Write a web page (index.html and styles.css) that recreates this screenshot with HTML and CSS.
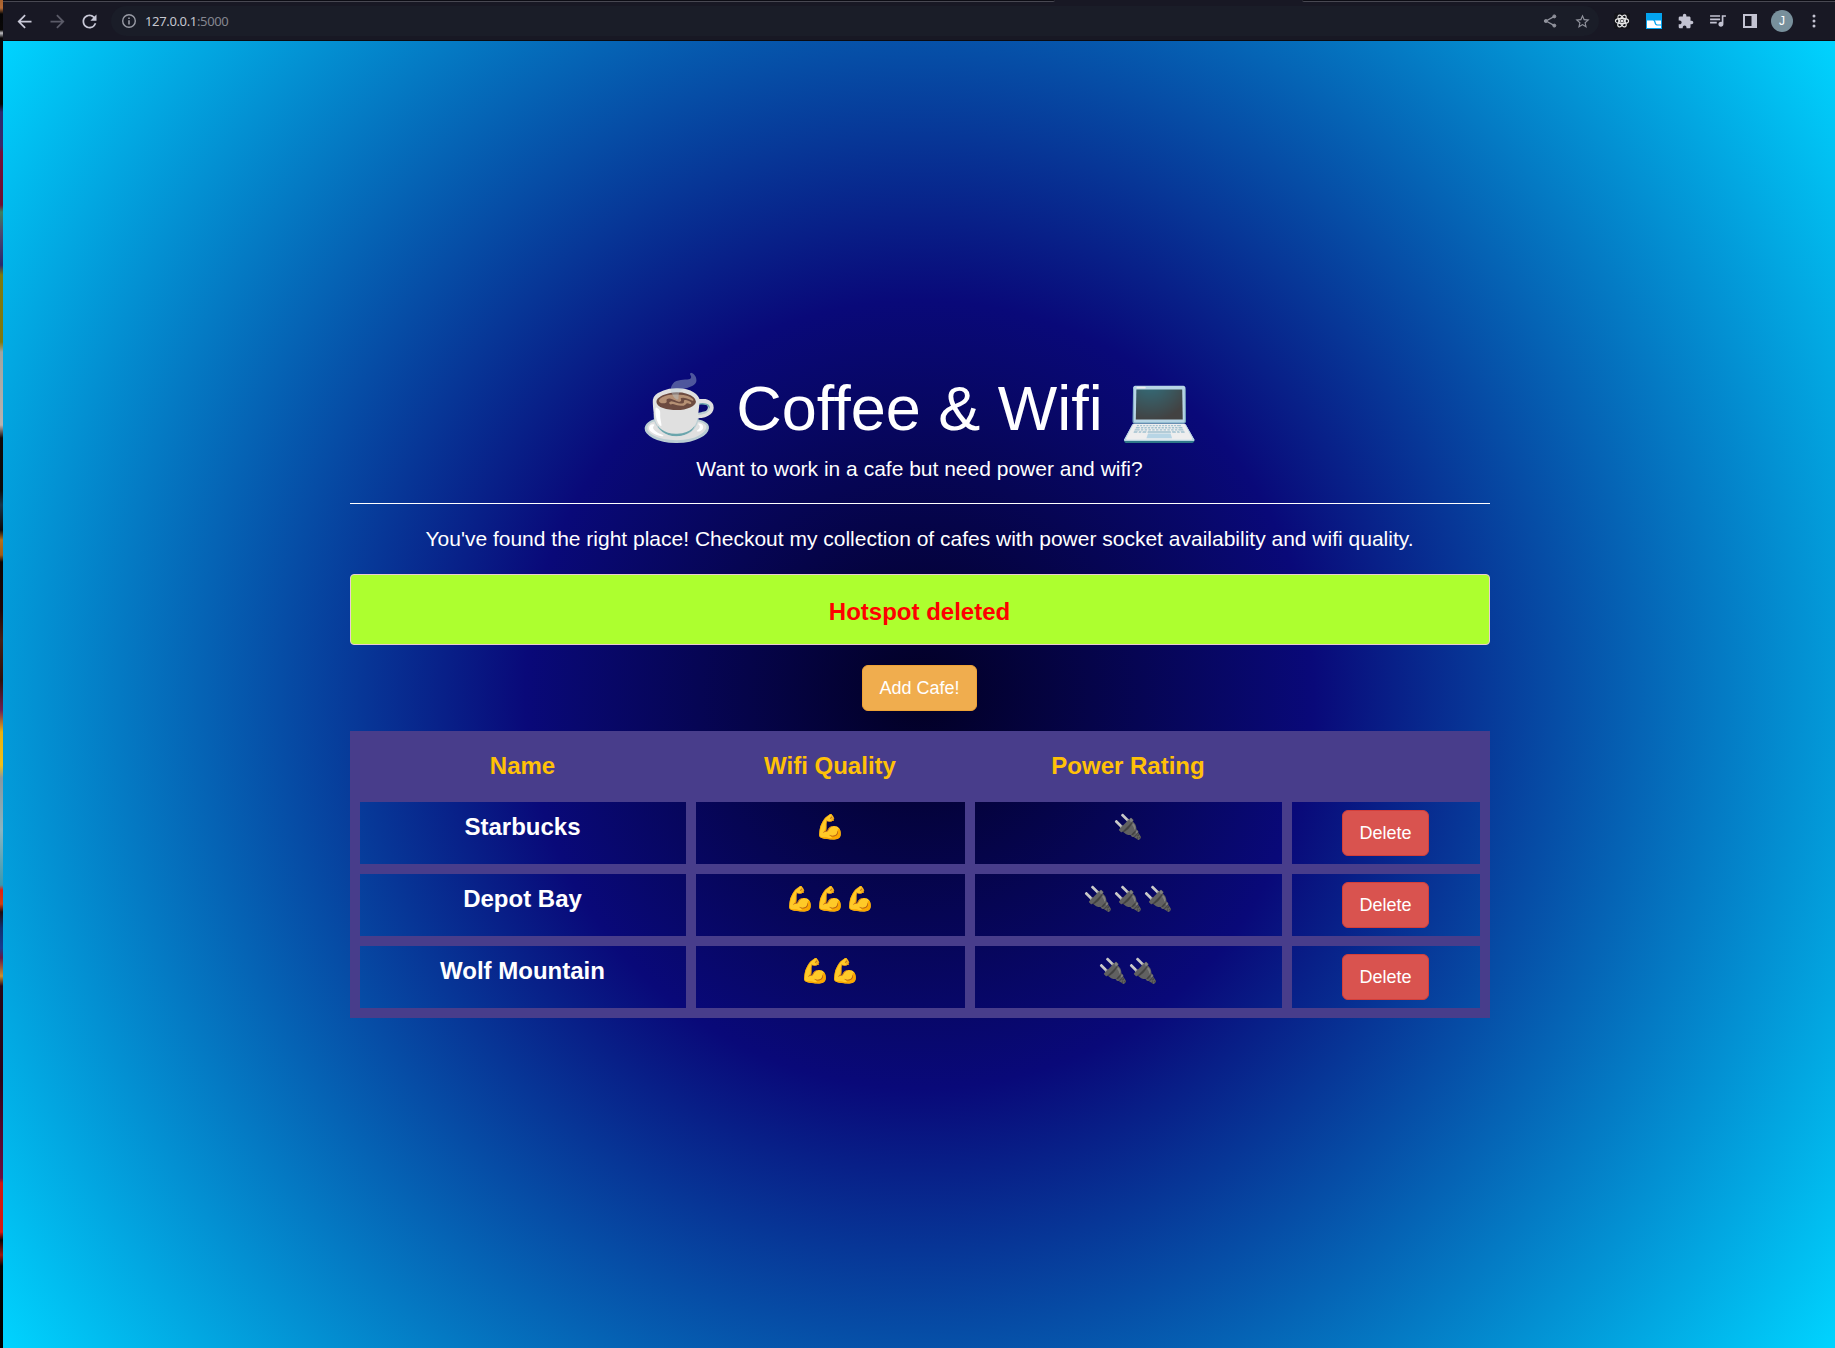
FILE: index.html
```html
<!DOCTYPE html>
<html lang="en">
<head>
<meta charset="utf-8">
<title>Coffee &amp; Wifi</title>
<link rel="stylesheet" href="styles.css">
</head>
<body>
<div class="desktop-edge"></div>
<div class="window">
  <header class="browser">
    <div class="tab-edge"><span class="edge-left"></span><span class="edge-right"></span></div>
    <div class="toolbar">
      <nav class="nav">
        <span class="tool"><svg width="21" height="21" viewBox="0 0 24 24" fill="#c9c9d8"><path d="M20 11H7.83l5.59-5.59L12 4l-8 8 8 8 1.41-1.41L7.83 13H20v-2z"/></svg></span>
        <span class="tool"><svg width="21" height="21" viewBox="0 0 24 24" fill="#5b5b68"><path d="M4 11h12.17l-5.59-5.59L12 4l8 8-8 8-1.41-1.41L16.17 13H4v-2z"/></svg></span>
        <span class="tool"><svg width="21" height="21" viewBox="0 0 24 24" fill="#c9c9d8"><path d="M17.65 6.35A7.96 7.96 0 0 0 12 4c-4.42 0-7.99 3.58-7.99 8s3.57 8 7.99 8c3.73 0 6.84-2.55 7.73-6h-2.08A5.99 5.99 0 0 1 12 18c-3.31 0-6-2.69-6-6s2.69-6 6-6c1.66 0 3.14.69 4.22 1.78L13 11h7V4l-2.35 2.35z"/></svg></span>
      </nav>
      <div class="address">
        <svg width="16" height="16" viewBox="0 0 16 16"><circle cx="8" cy="8" r="6.3" fill="none" stroke="#9a9ca6" stroke-width="1.4"/><path d="M7.2 7.2h1.6v4.2H7.2zM7.2 4.5h1.6v1.6H7.2z" fill="#9a9ca6"/></svg>
        <span class="url">127.0.0.1<span class="port">:5000</span></span>
        <span class="tool share"><svg width="16" height="16" viewBox="0 0 16 16" fill="#91939d" stroke="#91939d"><path d="M12 3.6L4 8l8 4.4" fill="none" stroke-width="1.3"/><circle cx="12.3" cy="3.4" r="1.5"/><circle cx="3.8" cy="8" r="1.5"/><circle cx="12.3" cy="12.6" r="1.5"/></svg></span>
        <span class="tool"><svg width="17" height="17" viewBox="0 0 24 24" fill="#91939d"><path d="M22 9.24l-7.19-.62L12 2 9.19 8.63 2 9.24l5.46 4.73L5.82 21 12 17.27 18.18 21l-1.63-7.03L22 9.24zM12 15.4l-3.76 2.27 1-4.28-3.32-2.88 4.38-.38L12 6.1l1.71 4.04 4.38.38-3.32 2.88 1 4.28L12 15.4z"/></svg></span>
      </div>
      <div class="extensions">
        <span class="tool"><svg width="16" height="16" viewBox="0 0 16 16" fill="none" stroke="#e8e8e8" stroke-width="1.2"><rect width="16" height="16" rx="2" fill="#14141a" stroke="none"/><ellipse cx="8" cy="8" rx="6.6" ry="2.6"/><ellipse cx="8" cy="8" rx="6.6" ry="2.6" transform="rotate(60 8 8)"/><ellipse cx="8" cy="8" rx="6.6" ry="2.6" transform="rotate(120 8 8)"/><circle cx="8" cy="8" r="1" fill="#e8e8e8"/></svg></span>
        <span class="tool"><svg width="16" height="16" viewBox="0 0 16 16"><path d="M0 0h16v16H0z" fill="#03a3ee"/><path d="M1 7.5h6c1.700 0 1.200 5 4 5H15V15H1z" fill="#fff"/><path d="M8.500 7.500H15v4h-3.500c-2 0-1.500-4-3-4z" fill="#fff"/></svg></span>
        <span class="tool"><svg width="16" height="16" viewBox="1 0 23 23" fill="#c3c3d2"><path d="M20.500 11H19V7c0-1.100-.9-2-2-2h-4V3.500C13 2.120 11.880 1 10.500 1S8 2.120 8 3.500V5H4c-1.100 0-1.990.9-1.990 2v3.800H3.500c1.490 0 2.700 1.210 2.700 2.700s-1.210 2.700-2.700 2.700H2V20c0 1.100.9 2 2 2h3.800v-1.500c0-1.490 1.210-2.700 2.700-2.700 1.490 0 2.700 1.210 2.700 2.700V22H17c1.100 0 2-.9 2-2v-4h1.500c1.380 0 2.500-1.120 2.500-2.500S21.880 11 20.500 11z"/></svg></span>
        <span class="tool"><svg width="20" height="20" viewBox="0.500 1 24 24" fill="#c3c3d2"><path d="M15 6H3v2h12V6zm0 4H3v2h12v-2zM3 16h8v-2H3v2zM17 6v8.180c-.31-.11-.65-.18-1-.18-1.660 0-3 1.340-3 3s1.340 3 3 3 3-1.340 3-3V8h3V6h-5z"/></svg></span>
        <span class="tool"><svg width="14" height="14" viewBox="0 0 14 14"><path fill-rule="evenodd" d="M0 0h14v14H0zM2 2v10h6.500V2z" fill="#c3c3d2"/></svg></span>
        <span class="tool"><span class="avatar">J</span></span>
        <span class="tool"><svg width="4" height="14" viewBox="0 0 4 14" fill="#c3c3d2"><circle cx="2" cy="2" r="1.500"/><circle cx="2" cy="7" r="1.500"/><circle cx="2" cy="12" r="1.500"/></svg></span>
      </div>
    </div>
  </header>
  <main class="page">
    <div class="container">
      <h1 class="title">☕️ Coffee &amp; Wifi 💻</h1>
      <p class="lead">Want to work in a cafe but need power and wifi?</p>
      <hr class="rule">
      <p class="lead intro">You've found the right place! Checkout my collection of cafes with power socket availability and wifi quality.</p>
      <div class="alert">Hotspot deleted</div>
      <a class="btn btn-add">Add Cafe!</a>
      <table class="cafes">
        <colgroup><col class="col-name"><col class="col-wifi"><col class="col-power"><col class="col-action"></colgroup>
        <thead><tr><th>Name</th><th>Wifi Quality</th><th>Power Rating</th><th></th></tr></thead>
        <tbody>
          <tr><td>Starbucks</td><td>💪</td><td>🔌</td><td><a class="btn btn-delete">Delete</a></td></tr>
          <tr><td>Depot Bay</td><td>💪💪💪</td><td>🔌🔌🔌</td><td><a class="btn btn-delete">Delete</a></td></tr>
          <tr><td>Wolf Mountain</td><td>💪💪</td><td>🔌🔌</td><td><a class="btn btn-delete">Delete</a></td></tr>
        </tbody>
      </table>
    </div>
  </main>
</div>
</body>
</html>
```

FILE: styles.css
```css
* { box-sizing: border-box; }

body {
  margin: 0;
  height: 1348px;
  display: flex;
  overflow: hidden;
  background: #000;
  font-family: "Liberation Sans", "Noto Color Emoji", Arial, sans-serif;
  color: #fff;
}

/* sliver of desktop wallpaper beside the window */
.desktop-edge {
  flex: 0 0 3px;
  background: linear-gradient(#a8602c 0, #b56a35 8px, #050505 14px, #0a0808 30px, #c0bfc4 33px, #080608 38px, #050505 104px, #2b2a6e 112px, #3a2a6a 146px, #74103a 152px, #6d1030 205px, #3c8060 212px, #4c4a70 232px, #2a2a6c 265px, #7e7a10 275px, #80780f 342px, #a0a4a0 352px, #b8b2b0 425px, #100a0a 438px, #0b0b0b 490px, #17354a 505px, #0c0a0c 530px, #b4701c 540px, #a05c18 555px, #0c0505 562px, #200606 610px, #452018 640px, #30100c 680px, #6e2050 710px, #e8b010 732px, #f0c018 765px, #8a98a0 778px, #8ab4c0 830px, #3a98b0 885px, #e02010 890px, #d04010 904px, #200c10 912px, #103070 928px, #183c90 948px, #6a1840 958px, #c89030 976px, #280818 986px, #2c0418 1080px, #52082c 1130px, #6a1040 1178px, #d01810 1183px, #d81a12 1232px, #0c0404 1240px, #a01810 1255px, #030303 1266px, #000 1348px);
}

.window { flex: 0 0 1833px; display: flex; flex-direction: column; }

.browser { height: 41px; background: #181824; border-bottom: 1px solid #0a0a10; }
.tab-edge { height: 2px; display: flex; justify-content: space-between; }
.edge-left, .edge-right { height: 2px; background: #0c0c14; border-bottom: 1px solid #484852; }
.edge-left { width: 1052px; border-bottom-right-radius: 2px; }
.edge-right { width: 534px; border-bottom-left-radius: 2px; }

.toolbar { height: 38px; display: flex; align-items: center; padding-left: 6px; }
.nav { display: flex; width: 102px; }
.nav .tool:first-child svg { margin-right: 1px; }
.tool { flex: 0 0 32px; height: 30px; display: flex; align-items: center; justify-content: center; }
.address {
  width: 1488px;
  height: 30px;
  display: flex;
  align-items: center;
  padding: 0 1px 0 10px;
  border-radius: 15px;
  background: #1a1d28;
}
.url {
  margin-left: 8px;
  font: 13px/18px "Noto Sans", sans-serif;
  letter-spacing: -0.35px;
  color: #c6c7d0;
}
.port { color: #85868f; }
.share { margin-left: auto; }
.extensions { display: flex; margin-left: 7px; }
.avatar {
  width: 22px;
  height: 22px;
  border-radius: 50%;
  background: #78909c;
  font: 12px/22px "Liberation Sans", sans-serif;
  text-align: center;
}

.page {
  flex: 1;
  background: radial-gradient(circle, #020024 0%, #090979 35%, #00d4ff 100%);
}
.container {
  width: 1140px;
  margin: 0 auto;
  padding-top: 333px;
  display: flex;
  flex-direction: column;
  align-items: center;
  text-align: center;
}
.title { margin: 0; font-size: 63px; font-weight: 500; line-height: 69px; white-space: nowrap; }
.lead { margin: 11px 0 0; font-size: 21px; line-height: 30px; }
.rule { width: 100%; height: 1px; margin: 19px 0 20px; border: 0; background: #fff; }
.intro { margin: 0; }
.alert {
  width: 100%;
  height: 71px;
  margin-top: 20px;
  border: 1px solid #ebccd1;
  border-radius: 4px;
  background: #adff2f;
  color: #f00;
  font-size: 24px;
  font-weight: 700;
  line-height: 73px;
}
.btn {
  display: inline-block;
  padding: 10px 16px;
  border: 1px solid;
  border-radius: 6px;
  font-size: 18px;
  font-weight: 400;
  line-height: 24px;
  color: #fff;
}
.btn-add { margin: 20px 0; background: #f0ad4e; border-color: #eea236; }
.btn-delete { background: #d9534f; border-color: #d43f3a; }

.cafes {
  width: 1140px;
  table-layout: fixed;
  border-spacing: 0;
  font-size: 24px;
  font-weight: 700;
}
.col-name { width: 346px; }
.col-wifi { width: 279px; }
.col-power { width: 317px; }
.col-action { width: 198px; }
.cafes th { height: 71px; padding: 0 10px 2px 0; background: #483d8b; color: #ffc107; }
.cafes th:first-child { padding-right: 0; }
.cafes td {
  height: 72px;
  padding: 8px;
  border: solid #483d8b;
  border-width: 0 10px 10px 0;
  vertical-align: top;
  line-height: 34px;
}
.cafes td:first-child { border-left-width: 10px; }
.cafes td .btn { vertical-align: top; }
```
